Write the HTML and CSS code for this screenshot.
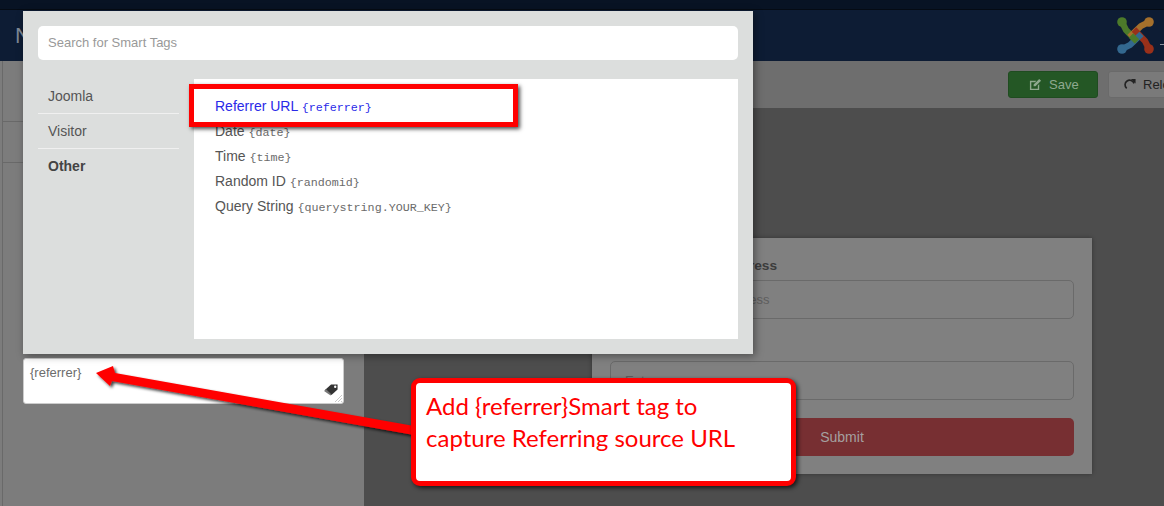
FILE: index.html
```html
<!DOCTYPE html>
<html lang="en">
<head>
<meta charset="utf-8">
<title>Smart Tags</title>
<link rel="stylesheet" href="styles.css">
</head>
<body>
<div class="page">
  <div class="topbar"></div>
  <header class="header">
    <span class="brand">N</span>
    <svg class="logo" viewBox="0 0 37 37" aria-hidden="true">
      <g fill="none" stroke-width="6.2" stroke-linejoin="round">
        <path d="M5 5 L9 13 L20 24.500" stroke="#4c7a2a"/>
        <path d="M32 5 L24 9 L12.500 20" stroke="#a5702c"/>
        <path d="M32 32 L28 24 L17 12.500" stroke="#99301a"/>
        <path d="M5 32 L13 28 L24.500 17" stroke="#33688f"/>
        <path d="M14 18.500 L20 24.500" stroke="#4c7a2a"/>
      </g>
      <circle cx="5" cy="5" r="4.800" fill="#4c7a2a"/>
      <circle cx="32" cy="5" r="4.800" fill="#a5702c"/>
      <circle cx="32" cy="32" r="4.800" fill="#99301a"/>
      <circle cx="5" cy="32" r="4.800" fill="#33688f"/>
    </svg>
    <span class="dash"></span>
  </header>
  <main class="workspace">
    <aside class="sidebar">
      <div class="rail-row rail-row-first"></div>
      <div class="rail-row"></div>
      <div class="field">
        <span class="field-text">{referrer}</span>
        <svg class="tag-icon" viewBox="0 0 16 14" aria-hidden="true"><path d="M1 7.500 7.500 1.500H14.500V7L8 13z" fill="#333"/><path d="M0 8.500 2 6.500 8 12.500 7 13.500z" fill="#777"/><circle cx="12" cy="4" r="1.300" fill="#fff"/></svg>
        <svg class="grip" viewBox="0 0 10 10" aria-hidden="true"><path d="M9 2 2 9M9 5 5 9M9 8 8 9" stroke="#bbb" stroke-width=".8"/></svg>
      </div>
    </aside>
    <div class="content">
      <div class="toolbar">
        <button class="btn btn-save" type="button">
          <svg class="btn-icon" viewBox="0 0 14 14" aria-hidden="true"><path d="M1 3h7L6.500 4.500H2.500v7h7V8L11 6.500V13H1z" fill="#8fa98f"/><path d="M5 7l6-6 2 2-6 6H5z" fill="#8fa98f"/></svg>
          <span>Save</span>
        </button>
        <button class="btn btn-reload" type="button">
          <svg class="btn-icon" viewBox="0 0 14 14" aria-hidden="true"><path d="M12 8A5 5 0 1 0 2.500 9.500" transform="rotate(-25 7 7)" fill="none" stroke="#222" stroke-width="1.800"/><path d="M8.500 1h5v5z" fill="#222"/></svg>
          <span>Reload</span>
        </button>
      </div>
      <section class="canvas">
        <form class="form-card">
          <label class="form-label">Enter Your Email Address</label>
          <div class="form-input"><span class="placeholder">Enter your email address</span></div>
          <div class="form-input form-input-second"><span class="placeholder">Enter</span></div>
          <div class="submit">Submit</div>
        </form>
      </section>
    </div>
  </main>

  <div class="modal">
    <div class="search">Search for Smart Tags</div>
    <div class="modal-body">
      <nav class="groups">
        <a class="group">Joomla</a>
        <a class="group">Visitor</a>
        <a class="group group-active">Other</a>
      </nav>
      <ul class="tags">
        <li class="tag tag-hover">Referrer URL <code>{referrer}</code></li>
        <li class="tag">Date <code>{date}</code></li>
        <li class="tag">Time <code>{time}</code></li>
        <li class="tag">Random ID <code>{randomid}</code></li>
        <li class="tag">Query String <code>{querystring.YOUR_KEY}</code></li>
      </ul>
    </div>
  </div>

  <div class="highlight"></div>
  <svg class="arrow" viewBox="0 0 340 90" aria-hidden="true">
    <defs><filter id="arrow-shadow" x="-5%" y="-20%" width="110%" height="140%"><feDropShadow dx="2" dy="2" stdDeviation="1.500" flood-color="#000" flood-opacity=".75"/></filter></defs>
    <path d="M2 7 L19 0 L21 7 L320 60 L320 69 L18 15 L16 20 Z" fill="#f00" filter="url(#arrow-shadow)"/>
  </svg>
  <div class="callout">Add {referrer}Smart tag to<br>capture Referring source URL</div>
</div>
</body>
</html>
```
FILE: styles.css
```css
* { box-sizing: border-box; }
html, body { margin: 0; padding: 0; }
body { font-family: "Liberation Sans", Arial, sans-serif; background: #4d4d4d; }
.page { position: relative; width: 1164px; height: 506px; overflow: hidden; display: flex; flex-direction: column; }
.topbar { height: 10px; flex: none; background: #081324; border-bottom: 1px solid #050b14; }
.header { height: 51px; flex: none; background: #0d1c34; display: flex; align-items: center; padding-left: 15px; }
.brand { color: #7d8794; font-size: 22px; }
.logo { width: 37px; height: 37px; margin-left: auto; }
.dash { width: 4px; height: 1px; flex: none; background: #8a929e; margin: 18px 0 0 6px; }
.workspace { flex: 1; display: flex; min-height: 0; }
.sidebar { width: 364px; flex: none; background: #7c7c7c; padding-left: 23px; position: relative; display: flex; flex-direction: column; }
.sidebar::before { content: ""; position: absolute; left: 2px; top: 0; bottom: 0; width: 1px; background: #696969; }
.rail-row { height: 41px; margin-left: -20px; border-bottom: 1px solid #696969; flex: none; }
.rail-row-first { height: 61px; }
.field { position: relative; width: 321px; height: 46px; margin-top: 195px; background: #fff; border: 1px solid #ccc; border-radius: 3px; padding: 6px; font-size: 13px; color: #6c6c6c; flex: none; }
.tag-icon { position: absolute; right: 4px; bottom: 7px; width: 15px; height: 13px; }
.grip { position: absolute; right: 0; bottom: 0; width: 10px; height: 10px; }
.content { flex: 1; min-width: 0; display: flex; flex-direction: column; }
.toolbar { height: 47px; flex: none; background: #6e6e6e; display: flex; align-items: flex-start; padding: 10px 0 0 644px; gap: 10px; overflow: hidden; }
.btn { height: 27px; flex: none; display: inline-flex; align-items: center; gap: 7px; border-radius: 3px; font: 13px "Liberation Sans", Arial, sans-serif; }
.btn-save { width: 90px; padding: 0 0 0 20px; background: #245725; border: 1px solid #1f4c20; color: #8fa98f; }
.btn-reload { width: 90px; padding: 0 0 0 14px; background: #7a7a7a; border: 1px solid #6a6a6a; color: #222; }
.btn-icon { width: 13px; height: 13px; flex: none; }
.canvas { flex: 1; background: #4d4d4d; padding: 130px 0 0 228px; }
.form-card { width: 500px; height: 236px; background: #808080; box-shadow: 0 0 4px rgba(0,0,0,.35); padding: 19px 18px; display: flex; flex-direction: column; }
.form-label { font-size: 13.7px; font-weight: 700; color: #3c3c3c; height: 23px; line-height: 17px; white-space: nowrap; flex: none; }
.form-input { height: 39px; border: 1px solid #6a6a6a; border-radius: 5px; padding: 0 14px; display: flex; align-items: center; font-size: 13px; flex: none; }
.form-input-second { margin-top: 42px; }
.placeholder { color: #5e5e5e; }
.submit { margin-top: 18px; height: 38px; flex: none; background: #772f32; border-radius: 5px; color: #a5a0a0; font-size: 14px; display: flex; align-items: center; justify-content: center; }
.modal { position: absolute; left: 23px; top: 11px; width: 730px; height: 343px; background: #dcdedd; padding: 15px; box-shadow: 2px 2px 8px rgba(0,0,0,.4); display: flex; flex-direction: column; }
.search { height: 34px; flex: none; background: #fff; border-radius: 5px; padding: 0 10px 2px; display: flex; align-items: center; font-size: 13px; color: #999; }
.modal-body { flex: 1; display: flex; margin-top: 19px; min-height: 0; }
.groups { width: 141px; flex: none; margin-right: 15px; display: flex; flex-direction: column; }
.group { height: 35px; padding: 0 10px; display: flex; align-items: center; font-size: 14px; color: #555; border-bottom: 1px solid #f0f0f0; }
.group-active { font-weight: 700; color: #444; border-bottom-color: transparent; }
.tags { flex: 1; list-style: none; margin: 0; background: #fff; padding: 15px 20px 15px 21px; }
.tag { height: 25px; line-height: 25px; font-size: 14px; color: #555; white-space: nowrap; }
.tag code { font-family: "Liberation Mono", monospace; font-size: 11.7px; color: #6b6b6b; }
.tag-hover, .tag-hover code { color: #2a2ae8; }
.highlight { position: absolute; left: 189px; top: 84px; width: 329px; height: 43px; border: 5px solid #f00; box-shadow: 2px 2px 4px rgba(0,0,0,.7); }
.arrow { position: absolute; left: 94px; top: 366px; width: 340px; height: 90px; overflow: visible; }
.callout { position: absolute; left: 411px; top: 378px; width: 385px; height: 108px; background: #fff; border: 5px solid #f00; border-radius: 9px; box-shadow: 2px 2px 4px rgba(0,0,0,.7); padding: 7px 10px; font-family: Lato, "Open Sans", sans-serif; font-size: 24px; line-height: 32px; color: #f00; white-space: nowrap; }
```
